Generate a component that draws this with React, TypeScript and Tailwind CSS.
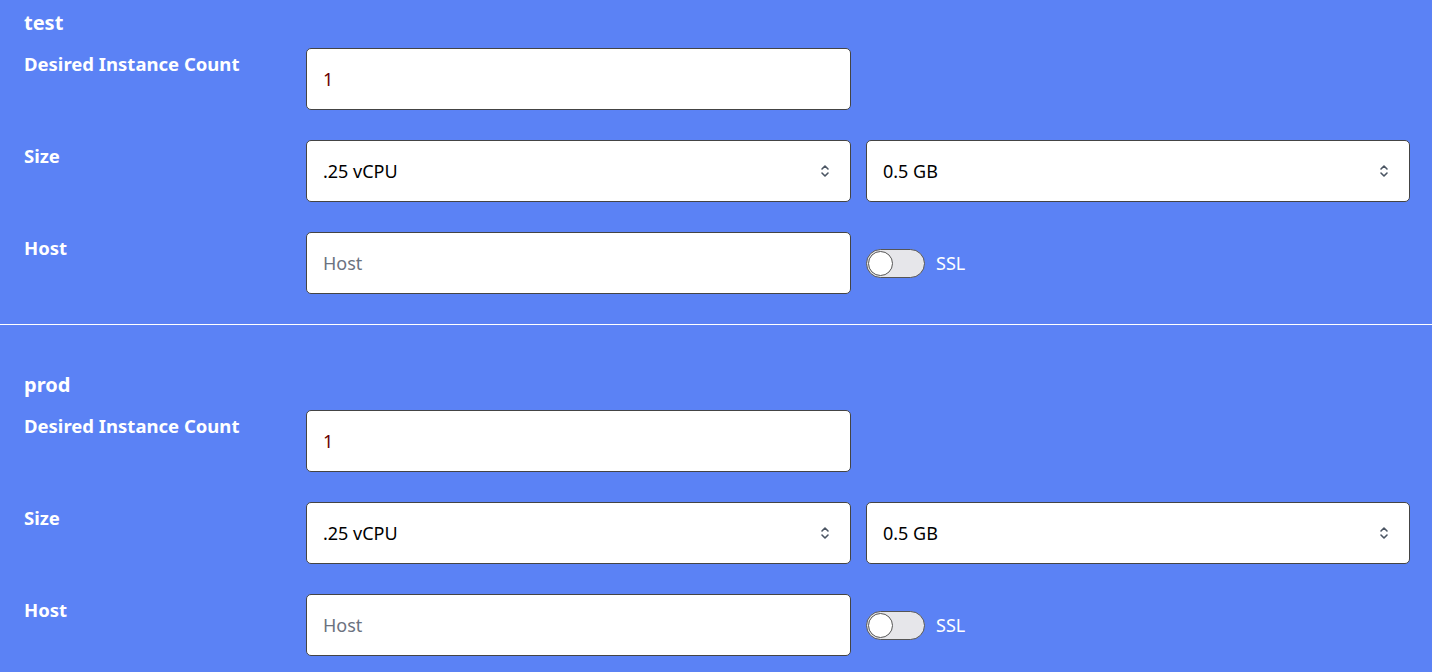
import { useState } from 'react'

const font = { fontFamily: '"Noto Sans", "Open Sans", sans-serif' }

function Chevrons() {
  return (
    <svg width="10" height="16" viewBox="0 0 10 16" fill="none" stroke="#4b5563" strokeWidth="1.6" strokeLinecap="round" strokeLinejoin="round">
      <path d="M2 6 L5 3 L8 6" />
      <path d="M2 10 L5 13 L8 10" />
    </svg>
  )
}

function SelectBox({ value }: { value: string }) {
  return (
    <div className="h-[62px] bg-white border border-[#444] rounded-[5px] flex items-center justify-between pl-4 pr-5 text-[18px] text-black">
      <span>{value}</span>
      <Chevrons />
    </div>
  )
}

function Toggle() {
  const [on, setOn] = useState(false)
  return (
    <button
      onClick={() => setOn(!on)}
      className="w-[59px] h-[29px] rounded-full border border-[#555] bg-[#e6e6ea] flex items-center px-[1px]"
    >
      <span className={`w-[25px] h-[25px] rounded-full bg-white border border-[#555] ${on ? 'ml-auto' : ''}`} />
    </button>
  )
}

function EnvSection({ name, first }: { name: string; first?: boolean }) {
  return (
    <section className={`px-6 pb-[30px] ${first ? 'pt-[9px]' : 'pt-[46px]'}`}>
      <h2 className="text-[20px] leading-[28px] font-bold text-white">{name}</h2>
      <div className="mt-[11px] grid grid-cols-[267px_545px_544px] gap-x-[15px] gap-y-[30px]">
        <label className="pt-[2px] text-[18.5px] leading-[27px] font-bold text-white">Desired Instance Count</label>
        <input
          defaultValue="1"
          className="h-[62px] bg-white border border-[#444] rounded-[5px] px-4 text-[18px] text-[#6b0000] outline-none"
        />
        <div />

        <label className="pt-[2px] text-[18.5px] leading-[27px] font-bold text-white">Size</label>
        <SelectBox value=".25 vCPU" />
        <SelectBox value="0.5 GB" />

        <label className="pt-[2px] text-[18.5px] leading-[27px] font-bold text-white">Host</label>
        <input
          placeholder="Host"
          className="h-[62px] bg-white border border-[#444] rounded-[5px] px-4 text-[18px] text-black placeholder:text-[#6b7280] outline-none"
        />
        <div className="flex items-center gap-[11px]">
          <Toggle />
          <span className="text-[18px] text-white">SSL</span>
        </div>
      </div>
    </section>
  )
}

export default function App() {
  return (
    <div className="min-h-screen w-full bg-[#5b82f5]" style={font}>
      <EnvSection name="test" first />
      <hr className="border-0 h-px bg-white" />
      <EnvSection name="prod" />
    </div>
  )
}
